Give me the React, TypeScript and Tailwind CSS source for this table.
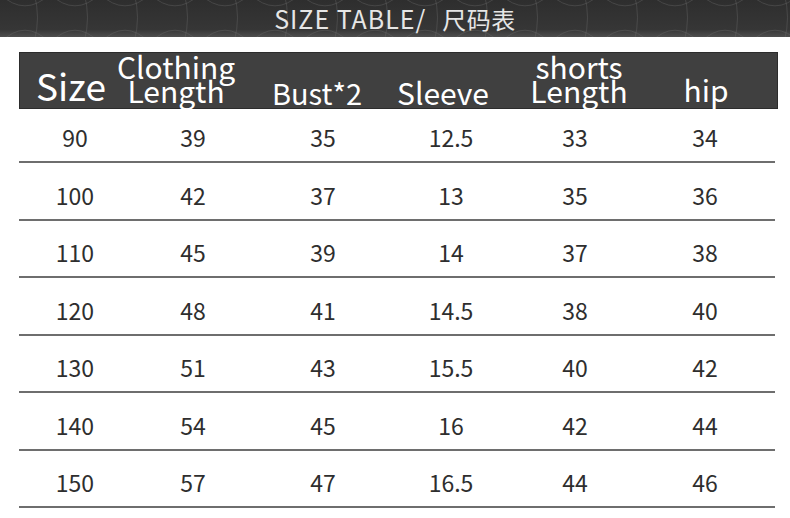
import React from "react";

const rows = [
  ["90", "39", "35", "12.5", "33", "34"],
  ["100", "42", "37", "13", "35", "36"],
  ["110", "45", "39", "14", "37", "38"],
  ["120", "48", "41", "14.5", "38", "40"],
  ["130", "51", "43", "15.5", "40", "42"],
  ["140", "54", "45", "16", "42", "44"],
  ["150", "57", "47", "16.5", "44", "46"],
];

const cols = "grid grid-cols-[112px_124px_136px_120px_128px_132px_1fr]";

function Lattice() {
  // faint ogee lattice on the banner
  const cells = [];
  for (let i = -1; i < 18; i++) {
    const x = i * 50;
    cells.push(
      <path
        key={i}
        d={`M${x} -6 Q${x + 25} 18 ${x + 50} -6 M${x} 44 Q${x + 25} 18 ${x + 50} 44 M${x + 25} -30 Q${x + 50} 18 ${x + 25} 66`}
        fill="none"
        stroke="#6a6a6a"
        strokeWidth="1"
        opacity="0.4"
      />
    );
  }
  return (
    <svg className="absolute inset-0 h-full w-full" viewBox="0 0 790 38" preserveAspectRatio="none">
      <defs>
        <linearGradient id="bn" x1="0" y1="0" x2="0" y2="1">
          <stop offset="0" stopColor="#2e2e2e" />
          <stop offset="0.8" stopColor="#363636" />
          <stop offset="1" stopColor="#4e4e4e" />
        </linearGradient>
      </defs>
      <rect width="790" height="38" fill="url(#bn)" />
      {cells}
    </svg>
  );
}

export default function App() {
  return (
    <div className="h-[518px] w-[790px] overflow-hidden bg-white font-['Noto_Sans_CJK_SC','Noto_Sans',sans-serif]">
      <div className="relative flex h-[37px] items-center justify-center">
        <Lattice />
        <span className="relative text-[25px] leading-none tracking-[1px] text-[#e6e6e6]">
          SIZE TABLE/
        </span>
        <span className="relative ml-[16px] text-[24px] leading-none tracking-[0.5px] text-[#e6e6e6]">尺码表</span>
      </div>

      <div className="ml-[19px] mr-[12px] mt-[15px]">
        <div className={`${cols} h-[57px] border border-[#2c2c2c] bg-[#404040] text-white`}>
          <div className="flex items-end justify-center pr-[10px] pb-[3px] text-[37px] leading-[40px]">Size</div>
          <div className="flex flex-col items-center justify-end pr-[36px] pb-[6px] text-[30px] leading-[24px]">
            <span>Clothing</span>
            <span>Length</span>
          </div>
          <div className="flex items-end justify-center pr-[14px] pb-0 text-[29px] leading-[32px]">Bust*2</div>
          <div className="flex items-end justify-center pr-[18px] pb-0 text-[30px] leading-[32px]">Sleeve</div>
          <div className="flex flex-col items-center justify-end pl-[6px] pb-[6px] text-[30px] leading-[24px]">
            <span>shorts</span>
            <span>Length</span>
          </div>
          <div className="flex items-end justify-center pb-[3px] text-[30px] leading-[32px]">hip</div>
          <div />
        </div>

        {rows.map((r, i) => (
          <div
            key={r[0]}
            className={`${cols} mr-[3px] border-b-2 border-[#6e6e6e] text-[23px] text-[#2e2e2e] ${i === 0 ? "h-[54px]" : "h-[57.5px]"}`}
          >
            {r.map((v, j) => (
              <div key={j} className="flex items-end justify-center pb-[12px] leading-[24px]">
                {v}
              </div>
            ))}
            <div />
          </div>
        ))}
      </div>
    </div>
  );
}
